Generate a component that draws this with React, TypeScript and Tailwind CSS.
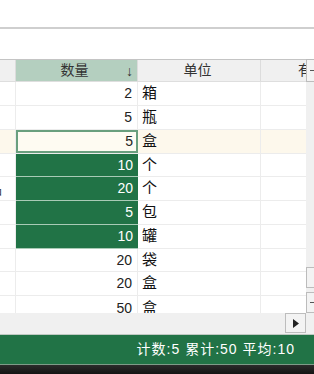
import React from 'react'

interface Row {
  qty: number
  unit: string
  h: string
  selected?: boolean
  green?: boolean
  edge?: string
}

const rows: Row[] = [
  { qty: 2, unit: '箱', h: 'h-[24px]' },
  { qty: 5, unit: '瓶', h: 'h-[24px]' },
  { qty: 5, unit: '盒', h: 'h-[24px]', selected: true },
  { qty: 10, unit: '个', h: 'h-[23px]', green: true },
  { qty: 20, unit: '个', h: 'h-[24px]', green: true, edge: '品' },
  { qty: 5, unit: '包', h: 'h-[24px]', green: true },
  { qty: 10, unit: '罐', h: 'h-[24px]', green: true },
  { qty: 20, unit: '袋', h: 'h-[23px]' },
  { qty: 20, unit: '盒', h: 'h-[24px]' },
  { qty: 50, unit: '盒', h: 'h-[25px]' },
]

function DataRow({ row }: { row: Row }) {
  const rowBg = row.selected ? 'bg-[#fdf8ec]' : 'bg-white'
  return (
    <div className={`flex ${row.h} ${rowBg} border-b border-[#ececec] shrink-0`}>
      <div className="w-[16px] shrink-0 border-r border-[#ececec] flex justify-end items-center overflow-hidden">
        {row.edge && <span className="pr-[13px] text-[14px] text-[#444] leading-none">{row.edge}</span>}
      </div>
      {row.green ? (
        <div className="w-[122px] shrink-0 -mb-px bg-[#217346] border-b border-[#a9cbb6] flex items-center justify-end pr-[5px] text-white text-[14px]">
          {row.qty}
        </div>
      ) : row.selected ? (
        <div className="w-[122px] shrink-0 border-2 border-[#6a9f7e] bg-[#fefbf2] flex items-center justify-end pr-[3px] text-[#222] text-[14px]">
          {row.qty}
        </div>
      ) : (
        <div className="w-[122px] shrink-0 border-r border-[#ececec] flex items-center justify-end pr-[5px] text-[#222] text-[14px]">
          {row.qty}
        </div>
      )}
      <div className="w-[123px] shrink-0 border-r border-[#ececec] flex items-center pl-[4px] text-[15px] text-[#111]">
        {row.unit}
      </div>
      <div className="flex-1" />
    </div>
  )
}

export default function App() {
  return (
    <div className="w-[314px] h-[374px] overflow-hidden flex flex-col bg-white font-['Liberation_Sans','Noto_Sans_CJK_SC',sans-serif]">
      <div className="h-[27px] shrink-0 bg-white" />
      <div className="h-[2px] shrink-0 bg-[#cfcfcf]" />
      <div className="h-[30px] shrink-0 bg-white" />

      <div className="h-[254px] shrink-0 flex overflow-hidden">
        <div className="w-[306px] shrink-0 flex flex-col overflow-hidden">
          <div className="flex h-[23px] shrink-0 border-t border-[#c4c4c4] border-b border-b-[#dedede] bg-[#f0f0f0] text-[14px] text-[#333]">
            <div className="w-[16px] shrink-0 border-r border-[#dcdcdc]" />
            <div className="w-[122px] shrink-0 bg-[#b4cfbf] border-r border-[#dcdcdc] flex items-center relative">
              <span className="flex-1 text-center pr-[4px]">数量</span>
              <span className="absolute right-[4px] top-[1px] text-[14px] text-[#333]">↓</span>
            </div>
            <div className="w-[123px] shrink-0 border-r border-[#dcdcdc] flex items-center justify-center pr-[3px]">单位</div>
            <div className="flex-1 flex items-center pl-[37px] overflow-hidden whitespace-nowrap">有效期</div>
          </div>
          {rows.map((row, i) => (
            <DataRow key={i} row={row} />
          ))}
        </div>
        <div className="flex-1 bg-[#f0f0f0] flex flex-col">
          <div className="h-[23px] border border-[#bcbcbc] border-r-0 flex items-center pl-[3px] bg-[#f3f3f3]">
            <div className="w-[4px] h-px bg-[#555]" />
          </div>
          <div className="flex-1" />
          <div className="h-[21px] border border-[#bcbcbc] border-r-0 bg-[#f3f3f3]" />
          <div className="h-[4px]" />
          <div className="h-[21px] border border-[#bcbcbc] border-r-0 flex items-center pl-[3px] bg-[#f3f3f3]">
            <div className="w-[4px] h-px bg-[#555]" />
          </div>
        </div>
      </div>

      <div className="h-[20px] shrink-0 bg-[#f0f0f0] flex justify-end pr-[8px]">
        <div className="w-[21px] h-[20px] border border-[#bdbdbd] bg-[#f3f3f3] flex items-center justify-center">
          <svg width="6" height="9" viewBox="0 0 6 9">
            <path d="M0 0 L6 4.5 L0 9 Z" fill="#222" />
          </svg>
        </div>
      </div>
      <div className="h-px shrink-0 bg-[#f0f0f0]" />
      <div className="h-px shrink-0 bg-[#bfc9c2]" />

      <div className="h-[29px] shrink-0 bg-[#217346] flex items-center justify-end pr-[19px] text-white text-[14px] tracking-[1px] whitespace-pre">
        计数:5 累计:50 平均:10
      </div>
      <div className="h-px shrink-0 bg-[#7d9c88]" />
      <div className="flex-1 bg-gradient-to-b from-[#2b2b2b] to-[#141414]" />
    </div>
  )
}
